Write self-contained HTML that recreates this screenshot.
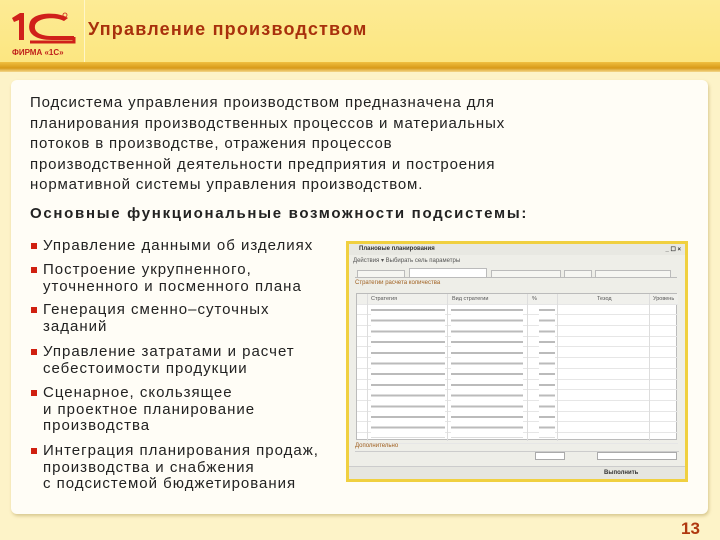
<!DOCTYPE html>
<html><head><meta charset="utf-8"><style>
*{margin:0;padding:0;box-sizing:border-box}
body{width:720px;height:540px;overflow:hidden;background:#fdf3c8;font-family:"Liberation Sans",sans-serif;position:relative;color:#222}
.hdr{position:absolute;left:0;top:0;width:720px;height:64px;background:linear-gradient(#fdeb95,#fce680)}
.bar{position:absolute;left:0;top:62px;width:720px;height:10px;background:linear-gradient(#f0c040,#d89a18 60%,#f3d78a)}
.div{position:absolute;left:84px;top:0;width:1px;height:62px;background:#fff6c8}
.title{position:absolute;left:88px;top:19px;font-size:18px;font-weight:bold;color:#a8300c;white-space:nowrap;letter-spacing:1.2px}
.panel{position:absolute;left:11px;top:80px;width:697px;height:434px;background:#fffdf6;border-radius:6px;box-shadow:1px 2px 3px rgba(150,120,40,.35)}
.t{position:absolute;white-space:nowrap;font-size:15px;color:#222}
.p{left:30px;line-height:20.5px;top:93px;letter-spacing:0.85px}
.h{left:30px;top:205px;font-weight:bold;font-size:15px;letter-spacing:1.7px}
.b{left:43px;line-height:16.5px;letter-spacing:1px}
.sq{position:absolute;left:31px;width:6px;height:6px;background:#d02010}
.num{position:absolute;left:681px;top:519px;font-size:17px;font-weight:bold;color:#b03810}
.win{position:absolute;left:346px;top:241px;width:342px;height:241px;border:3px solid #f0d040;background:#eeeee8;font-size:6px;color:#555;overflow:hidden}
.tb{position:absolute;left:7px;top:49px;width:321px;height:147px;background:#fff;border:1px solid #bbb}
.row{position:absolute;left:0;width:321px;height:10.7px;border-bottom:1px solid #e6e6e6;font-size:5.5px;line-height:10px;white-space:nowrap}
.row span{position:absolute}
</style></head><body>
<div class="hdr"></div>
<div class="bar"></div>
<div class="div"></div>
<svg style="position:absolute;left:8px;top:10px" width="70" height="50" viewBox="0 0 70 50">
<path d="M4 8 L12 3 H16 V30 H11 V10 L6 12Z" fill="#d0201a"/>
<path d="M60 8 C52 2 26 1 22 12 C18 24 28 30 44 30 H66 V26 H44 C32 26 26 22 27 16 C28 8 46 6 56 11Z" fill="#d0201a"/>
<path d="M22 32 H66 V27" fill="none" stroke="#d0201a" stroke-width="3"/>
<circle cx="57" cy="5" r="2" fill="none" stroke="#d0201a" stroke-width="0.8"/>
<text x="4" y="45" font-family="Liberation Sans" font-size="8" font-weight="bold" fill="#c0201a">ФИРМА «1С»</text>
</svg>
<div class="title">Управление производством</div>
<div class="panel"></div>
<div class="t p">Подсистема управления производством предназначена для<br>планирования производственных процессов и материальных<br>потоков в производстве, отражения процессов<br>производственной деятельности предприятия и построения<br>нормативной системы управления производством.</div>
<div class="t h">Основные функциональные возможности подсистемы:</div>
<div class="sq" style="top:243px"></div><div class="t b" style="top:238px">Управление данными об изделиях</div>
<div class="sq" style="top:267px"></div><div class="t b" style="top:262px">Построение укрупненного,<br>уточненного и посменного плана</div>
<div class="sq" style="top:307px"></div><div class="t b" style="top:302px">Генерация сменно–суточных<br>заданий</div>
<div class="sq" style="top:349px"></div><div class="t b" style="top:344px">Управление затратами и расчет<br>себестоимости продукции</div>
<div class="sq" style="top:390px"></div><div class="t b" style="top:385px">Сценарное, скользящее<br>и проектное планирование<br>производства</div>
<div class="sq" style="top:448px"></div><div class="t b" style="top:443px">Интеграция планирования продаж,<br>производства и снабжения<br>с подсистемой бюджетирования</div>
<div class="win">
<div style="position:absolute;left:0;top:0;width:336px;height:11px;background:#e8e8e2;font-weight:bold;padding:2px 0 0 10px;color:#333">Плановые планирования<span style="position:absolute;right:4px">_ ☐ ×</span></div>
<div style="position:absolute;left:4px;top:13px;color:#555">Действия ▾ Выбирать сель параметры</div>
<div style="position:absolute;left:6px;top:25px;width:322px;height:9px;border-bottom:1px solid #bbb"></div>
<div style="position:absolute;left:8px;top:26px;width:48px;height:8px;border:1px solid #bbb;background:#f6f6f2"></div>
<div style="position:absolute;left:60px;top:24px;width:78px;height:10px;border:1px solid #bbb;background:#fff"></div>
<div style="position:absolute;left:142px;top:26px;width:70px;height:8px;border:1px solid #bbb;background:#f6f6f2"></div>
<div style="position:absolute;left:215px;top:26px;width:28px;height:8px;border:1px solid #bbb;background:#f6f6f2"></div>
<div style="position:absolute;left:246px;top:26px;width:76px;height:8px;border:1px solid #bbb;background:#f6f6f2"></div>
<div style="position:absolute;left:6px;top:36px;color:#a06020">Стратегии расчета количества</div>
<div class="tb">
<div class="row" style="top:0;background:#f0f0ec"><span style="left:14px">Стратегия</span><span style="left:95px">Вид стратегии</span><span style="left:175px">%</span><span style="left:240px">Тезод</span><span style="left:296px">Уровень</span></div>
<div class="row" style="top:10.7px"></div><div class="row" style="top:21.4px"></div><div class="row" style="top:32.1px"></div><div class="row" style="top:42.8px"></div><div class="row" style="top:53.5px"></div><div class="row" style="top:64.2px"></div><div class="row" style="top:74.9px"></div><div class="row" style="top:85.6px"></div><div class="row" style="top:96.3px"></div><div class="row" style="top:107px"></div><div class="row" style="top:117.7px"></div><div class="row" style="top:128.4px"></div><div class="row" style="top:139.1px"></div>
<div style="position:absolute;left:10px;top:0;width:1px;height:147px;background:#ddd"></div>
<div style="position:absolute;left:90px;top:0;width:1px;height:147px;background:#ddd"></div>
<div style="position:absolute;left:170px;top:0;width:1px;height:147px;background:#ddd"></div>
<div style="position:absolute;left:200px;top:0;width:1px;height:147px;background:#ddd"></div>
<div style="position:absolute;left:292px;top:0;width:1px;height:147px;background:#ddd"></div>
<div style="position:absolute;left:14px;top:12px;width:74px;height:132px;background:repeating-linear-gradient(#fff 0 3px,#bbb 3px 5px,#fff 5px 10.7px)"></div>
<div style="position:absolute;left:94px;top:12px;width:72px;height:132px;background:repeating-linear-gradient(#fff 0 3px,#bbb 3px 5px,#fff 5px 10.7px)"></div>
<div style="position:absolute;left:182px;top:12px;width:16px;height:132px;background:repeating-linear-gradient(#fff 0 3px,#bbb 3px 5px,#fff 5px 10.7px)"></div>
</div>
<div style="position:absolute;left:6px;top:199px;color:#a06020">Дополнительно</div>
<div style="position:absolute;left:6px;top:207px;width:324px;height:10px;border-top:1px solid #ccc"></div>
<div style="position:absolute;left:186px;top:208px;width:30px;height:8px;background:#fff;border:1px solid #aaa"></div>
<div style="position:absolute;left:248px;top:208px;width:80px;height:8px;background:#fff;border:1px solid #aaa"></div>
<div style="position:absolute;left:0;top:222px;width:336px;height:14px;background:#e6e6e0;border-top:1px solid #ccc"></div>
<div style="position:absolute;left:255px;top:226px;font-weight:bold;color:#333">Выполнить</div>
</div>
<div class="num">13</div>
</body></html>
